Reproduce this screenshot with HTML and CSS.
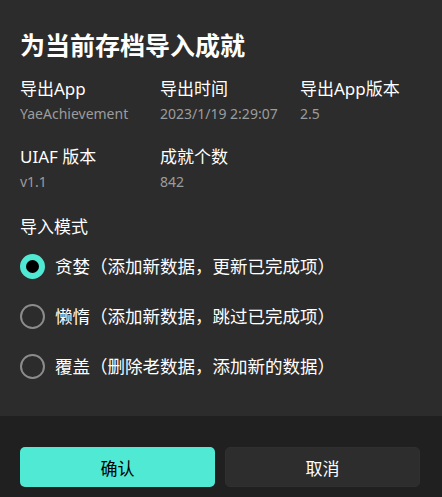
FILE: index.html
```html
<!DOCTYPE html>
<html lang="zh-CN">
<head>
<meta charset="utf-8">
<link rel="stylesheet" href="styles.css">
</head>
<body>
<div class="dialog">
  <div class="content">
    <h1 class="title">为当前存档导入成就</h1>
    <div class="info-grid">
      <div class="info">
        <div class="label">导出App</div>
        <div class="value">YaeAchievement</div>
      </div>
      <div class="info">
        <div class="label">导出时间</div>
        <div class="value">2023/1/19 2:29:07</div>
      </div>
      <div class="info">
        <div class="label">导出App版本</div>
        <div class="value">2.5</div>
      </div>
      <div class="info">
        <div class="label">UIAF 版本</div>
        <div class="value">v1.1</div>
      </div>
      <div class="info">
        <div class="label">成就个数</div>
        <div class="value">842</div>
      </div>
    </div>
    <div class="section-label">导入模式</div>
    <div class="radio-list">
      <div class="radio-row">
        <span class="radio checked"></span>
        <span class="radio-text">贪婪（添加新数据，更新已完成项）</span>
      </div>
      <div class="radio-row">
        <span class="radio"></span>
        <span class="radio-text">懒惰（添加新数据，跳过已完成项）</span>
      </div>
      <div class="radio-row">
        <span class="radio"></span>
        <span class="radio-text">覆盖（删除老数据，添加新的数据）</span>
      </div>
    </div>
  </div>
  <div class="footer">
    <button class="btn primary">确认</button>
    <button class="btn secondary">取消</button>
  </div>
</div>
</body>
</html>
```

FILE: styles.css
```css
html, body {
  margin: 0;
  padding: 0;
  background: #2c2c2c;
}
body {
  width: 442px;
  height: 497px;
  overflow: hidden;
  font-family: "Noto Sans", "Noto Sans CJK SC", sans-serif;
  color: #ffffff;
}
.dialog {
  display: flex;
  flex-direction: column;
  height: 497px;
}
.content {
  padding: 26px 20px 25px 20px;
  background: #2c2c2c;
}
.title {
  margin: 0;
  font-size: 25px;
  line-height: 36px;
  font-weight: 700;
  font-family: "Noto Sans CJK SC", sans-serif;
}
.info-grid {
  margin-top: 14px;
  display: grid;
  grid-template-columns: 140px 140px 140px;
  row-gap: 18px;
}
.label {
  font-size: 17px;
  line-height: 25px;
}
.value {
  font-size: 14px;
  line-height: 25px;
  color: #9c9c9c;
}
.section-label {
  margin-top: 20px;
  font-size: 17px;
  line-height: 25px;
}
.radio-list {
  margin-top: 2px;
  display: flex;
  flex-direction: column;
}
.radio-row {
  height: 50px;
  display: flex;
  align-items: center;
  gap: 10px;
}
.radio {
  box-sizing: border-box;
  width: 25px;
  height: 25px;
  border-radius: 50%;
  border: 2px solid #8c8c8c;
  flex: none;
}
.radio.checked {
  border: 6.5px solid #4fe9d4;
  background: #000000;
}
.radio-text {
  font-size: 17.5px;
  line-height: 25px;
}
.footer {
  flex: 1;
  background: #202020;
  padding: 31px 22px 0 20px;
  display: flex;
  gap: 10px;
  align-items: flex-start;
}
.btn {
  flex: 1;
  height: 40px;
  border-radius: 5px;
  font-family: "Noto Sans CJK SC", sans-serif;
  font-size: 17px;
  border: 1px solid transparent;
  padding: 0;
}
.btn.primary {
  background: #4fe9d4;
  color: #000000;
}
.btn.secondary {
  background: #2d2d2d;
  color: #ffffff;
  border-color: #303030;
}
```
